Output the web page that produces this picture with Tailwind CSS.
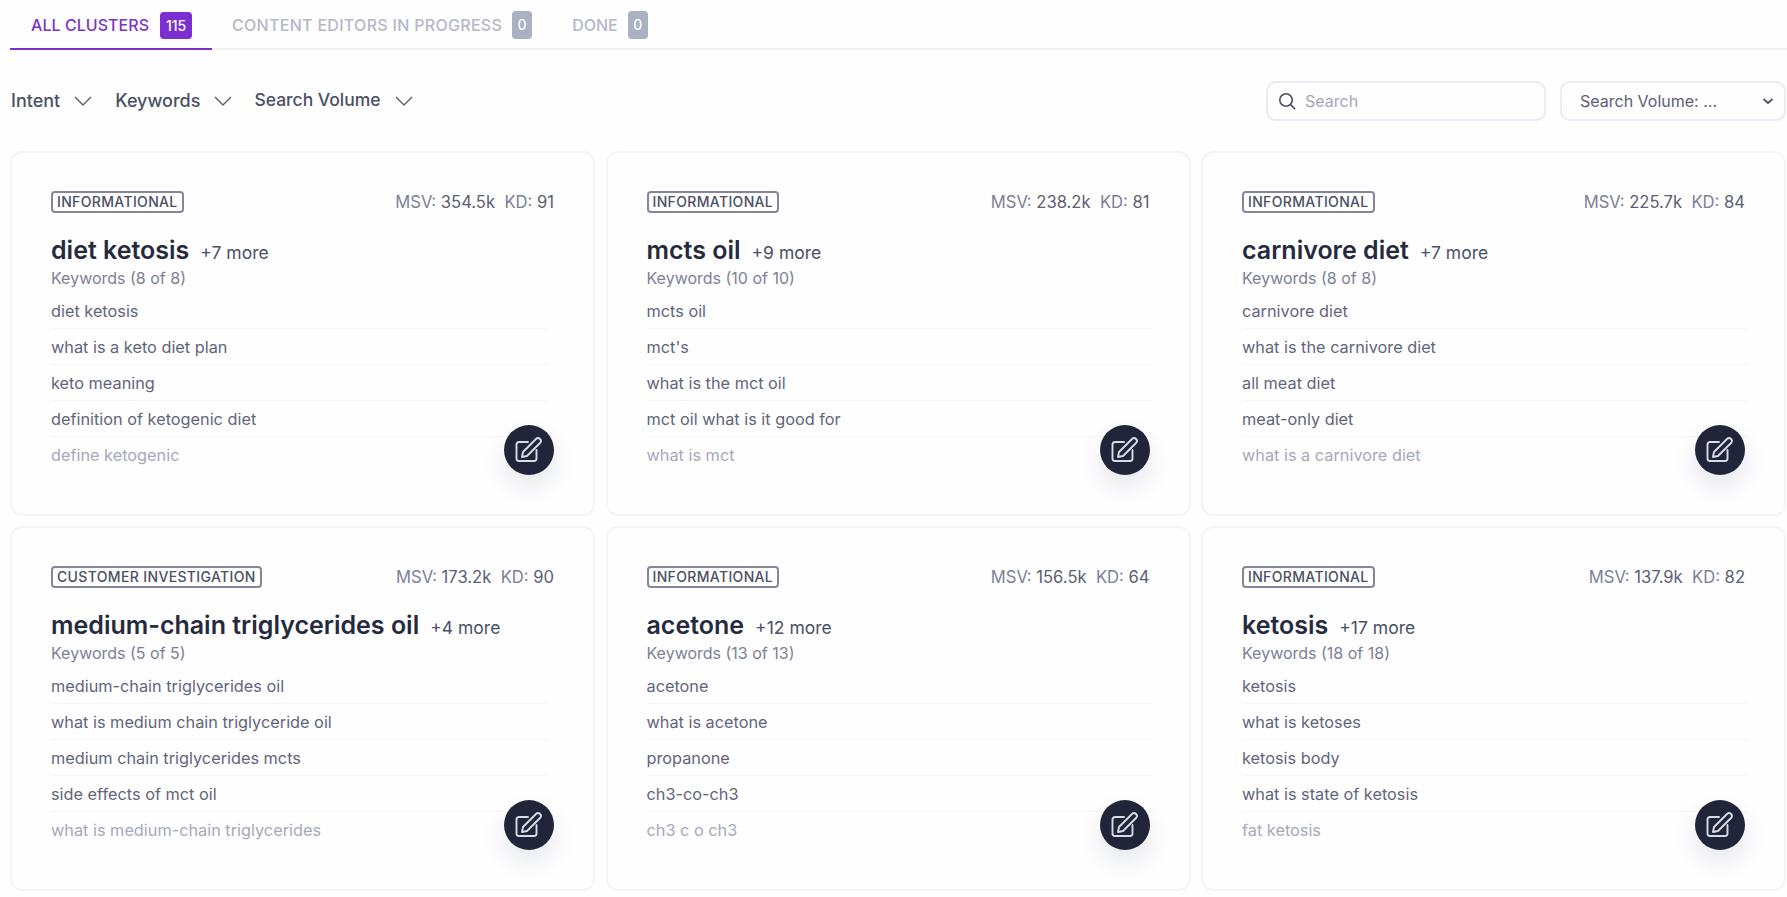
<!DOCTYPE html>
<html lang="en">
<head>
    <meta charset="UTF-8">
    <title>Clusters</title>
    <script src="https://cdn.jsdelivr.net/npm/@tailwindcss/browser@4"></script>
</head>
<body class="bg-[#fefeff] font-['Inter',sans-serif] overflow-hidden">
    <div class="w-[1787px] h-[897px] pl-[10px] pr-px">

        <!-- Tabs -->
        <div class="h-[50px] flex items-stretch border-b-2 border-[#f1f0f7] -mr-px text-[16px] font-medium">
            <div class="w-[202px] -mb-[2px] pl-[21px] flex items-start pt-[12px] gap-[11px] border-b-2 border-[#7b2fd0] text-[#7b35c4]">
                <span class="leading-[26px] tracking-[0.05px]">ALL CLUSTERS</span>
                <span class="w-[32px] h-[27px] rounded-[4px] bg-[#7b2fd0] text-white text-[14px] leading-[27px] text-center">115</span>
            </div>
            <div class="ml-[20px] flex items-start pt-[11px] gap-[10px] text-[#b4b8c8]">
                <span class="leading-[28px] tracking-[0.3px]">CONTENT EDITORS IN PROGRESS</span>
                <span class="w-[20px] h-[28px] rounded-[4px] bg-[#a9b1c3] text-white text-[14px] leading-[28px] text-center">0</span>
            </div>
            <div class="ml-[40px] flex items-start pt-[11px] gap-[10px] text-[#b4b8c8]">
                <span class="leading-[28px]">DONE</span>
                <span class="w-[20px] h-[28px] rounded-[4px] bg-[#a9b1c3] text-white text-[14px] leading-[28px] text-center">0</span>
            </div>
        </div>

        <!-- Filters -->
        <div class="h-[101px] flex items-center text-[#4b5063]">
            <div class="pl-px flex items-center text-[18px] font-medium">
                <span>Intent</span>
                <svg class="ml-[14px] w-[18px] h-[18px]" viewBox="0 0 18 18" fill="none" stroke="#5b6072" stroke-width="1.4"><path d="M1 5l8 8 8-8"/></svg>
                <span class="ml-[23px]">Keywords</span>
                <svg class="ml-[14px] w-[18px] h-[18px]" viewBox="0 0 18 18" fill="none" stroke="#5b6072" stroke-width="1.4"><path d="M1 5l8 8 8-8"/></svg>
                <span class="ml-[22px] text-[17.500px]">Search Volume</span>
                <svg class="ml-[14px] w-[18px] h-[18px]" viewBox="0 0 18 18" fill="none" stroke="#5b6072" stroke-width="1.4"><path d="M1 5l8 8 8-8"/></svg>
            </div>
            <div class="ml-auto flex items-center gap-[15px]">
                <div class="w-[280px] h-[40px] -mr-px border-2 border-[#eaebf4] rounded-[10px] flex items-center pl-[9px] gap-[8px] text-[16px] text-[#a3a6bb]">
                    <svg class="w-[20px] h-[20px]" viewBox="0 0 20 20" fill="none" stroke="#4b5063" stroke-width="1.6" stroke-linecap="round"><circle cx="9" cy="9" r="6.200"/><path d="M13.600 13.600l4 4"/></svg>
                    <span>Search</span>
                </div>
                <div class="w-[226px] h-[40px] border-2 border-[#eaebf4] rounded-[10px] flex items-center pl-[18px] pr-[9px] text-[16px] text-[#5b6072]">
                    <span>Search Volume: ...</span>
                    <svg class="ml-auto w-[14px] h-[14px]" viewBox="0 0 14 14" fill="none" stroke="#4b5063" stroke-width="1.7" stroke-linecap="round" stroke-linejoin="round"><path d="M3 5.500l4 3.500 4-3.500"/></svg>
                </div>
            </div>
        </div>

        <!-- Cards -->
        <div id="cards" class="grid grid-cols-[585px_585px_585px] gap-x-[10.500px] gap-y-[10px]"></div>
    </div>

    <script>
        const clusters = [
            { tag: 'INFORMATIONAL', msv: '354.5k', kd: 91, title: 'diet ketosis', more: 7, count: 8, rows: ['diet ketosis', 'what is a keto diet plan', 'keto meaning', 'definition of ketogenic diet', 'define ketogenic'] },
            { tag: 'INFORMATIONAL', msv: '238.2k', kd: 81, title: 'mcts oil', more: 9, count: 10, rows: ['mcts oil', "mct's", 'what is the mct oil', 'mct oil what is it good for', 'what is mct'] },
            { tag: 'INFORMATIONAL', msv: '225.7k', kd: 84, title: 'carnivore diet', more: 7, count: 8, rows: ['carnivore diet', 'what is the carnivore diet', 'all meat diet', 'meat-only diet', 'what is a carnivore diet'] },
            { tag: 'CUSTOMER INVESTIGATION', msv: '173.2k', kd: 90, title: 'medium-chain triglycerides oil', more: 4, count: 5, rows: ['medium-chain triglycerides oil', 'what is medium chain triglyceride oil', 'medium chain triglycerides mcts', 'side effects of mct oil', 'what is medium-chain triglycerides'] },
            { tag: 'INFORMATIONAL', msv: '156.5k', kd: 64, title: 'acetone', more: 12, count: 13, rows: ['acetone', 'what is acetone', 'propanone', 'ch3-co-ch3', 'ch3 c o ch3'] },
            { tag: 'INFORMATIONAL', msv: '137.9k', kd: 82, title: 'ketosis', more: 17, count: 18, rows: ['ketosis', 'what is ketoses', 'ketosis body', 'what is state of ketosis', 'fat ketosis'] }
        ];

        document.getElementById('cards').innerHTML = clusters.map((c, n) => `
            <div class="relative h-[365px] border-2 border-[#f4f4fa] rounded-[12px] pl-[39px] pr-[39px] pt-[38px]">
                <div class="flex items-center justify-between h-[22px]">
                    <span class="h-[22px] px-[4px] border-2 border-[#84869c] rounded-[4px] text-[14px] leading-[17px] font-medium tracking-[0.35px] text-[#4b5063]">${c.tag}</span>
                    <span class="text-[16.600px] text-[#7c8095]">MSV: <span class="text-[#5b6072]">${c.msv}</span>&nbsp; KD: <span class="text-[#5b6072]">${c.kd}</span></span>
                </div>
                <div class="mt-[21px] h-[32px] flex items-baseline gap-[11px]">
                    <span class="text-[25px] leading-[32px] font-semibold text-[#262a3e]">${c.title}</span>
                    <span class="text-[17.500px] text-[#4b5063]">+${c.more} more</span>
                </div>
                <div class="mt-[1px] text-[16px] leading-[22px] text-[#7c8095]">Keywords (${c.count} of ${c.count})</div>
                <div class="mt-[4px] ${n % 3 === 0 ? 'mr-[6px]' : '-mr-[3px]'}">
                    ${c.rows.map((r, i) => `<div class="h-[36px] text-[16.300px] leading-[36px] ${i < 4 ? 'border-b border-[#f5f5fa] text-[#62657a]' : 'text-[#a6a9b8]'}">${r}</div>`).join('')}
                </div>
                <div class="absolute right-[39px] top-[272px] w-[50px] h-[50px] rounded-full bg-[#21253a] flex items-center justify-center shadow-[0_12px_24px_rgba(33,37,58,0.10)]">
                    <svg class="w-[28px] h-[28px]" viewBox="0 0 28 28" fill="none" stroke="#d9dce6" stroke-width="1.900" stroke-linecap="round" stroke-linejoin="round">
                        <path d="M13 6H4a2.500 2.500 0 0 0-2.500 2.500v14A2.500 2.500 0 0 0 4 25h15a2.500 2.500 0 0 0 2.500-2.500V14"/>
                        <path d="M7 21l1-5L21 3a2.800 2.800 0 0 1 4 4L12 20z"/>
                    </svg>
                </div>
            </div>`).join('');
    </script>
</body>
</html>
